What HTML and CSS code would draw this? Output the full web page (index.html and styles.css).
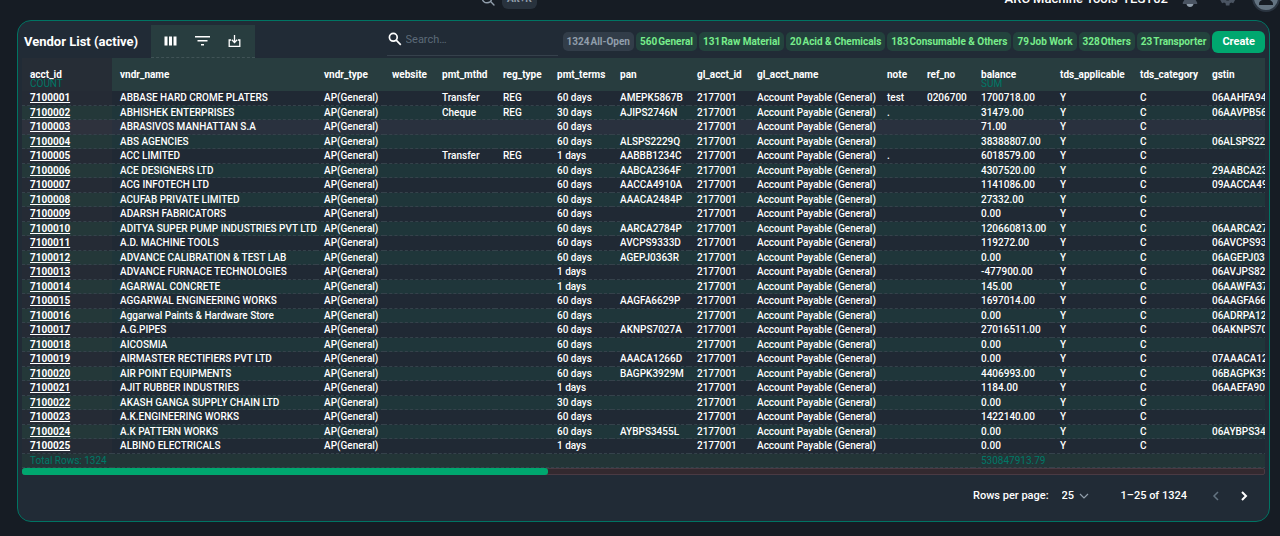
FILE: index.html
```html
<!DOCTYPE html>
<html lang="en">
<head>
    <meta charset="UTF-8">
    <meta name="viewport" content="width=device-width, initial-scale=1.0">
    <title>Vendor List</title>
    <link rel="stylesheet" href="styles.css">
</head>
<body>
    <header class="topbar">
        <button class="quick-search" aria-label="Quick search">
            <svg width="14" height="14" viewBox="0 0 14 14" fill="none" stroke="currentColor" stroke-width="1.4" stroke-linecap="round"><circle cx="6" cy="6" r="4.8"/><path d="M9.6 9.6 13 13"/></svg>
            <kbd>Alt+K</kbd>
        </button>
        <div class="account">
            <span class="company">ARC Machine Tools-TEST02</span>
            <button class="icon-button bell" aria-label="Notifications">
                <svg width="18" height="20" viewBox="0 0 18 20"><path d="M9 1C5.500 1 4 4 4 7v4l-2.200 3.500V16h14.400v-1.500L14 11V7c0-3-1.500-6-5-6z" fill="#4a5462"/><path d="M5.500 16h7c-.4 2-1.700 3-3.500 3s-3.100-1-3.500-3z" fill="#919eab"/></svg>
            </button>
            <button class="icon-button gear" aria-label="Settings">
                <svg width="20" height="20" viewBox="0 0 24 24" fill="currentColor"><path d="M19.400 13a7.500 7.500 0 0 0 0-2l2.200-1.600-2.100-3.700-2.500 1a7.500 7.500 0 0 0-1.700-1L14.900 3h-4.200l-.4 2.700a7.500 7.500 0 0 0-1.700 1l-2.500-1L4 9.400 6.200 11a7.500 7.500 0 0 0 0 2L4 14.600l2.100 3.700 2.500-1a7.500 7.500 0 0 0 1.700 1l.4 2.700h4.200l.4-2.700a7.500 7.500 0 0 0 1.700-1l2.500 1 2.100-3.700zM12.800 15a3 3 0 1 1 0-6 3 3 0 0 1 0 6z"/></svg>
            </button>
            <button class="icon-button avatar" aria-label="Profile">
                <svg width="28" height="28" viewBox="0 0 28 28"><circle cx="14" cy="14" r="13" fill="#637381" stroke="#2b3541" stroke-width="2"/><circle cx="14" cy="10" r="4" fill="#161c24"/><path d="M7 20c0-3 3-4.500 7-4.500s7 1.500 7 4.500v1H7z" fill="#161c24"/></svg>
            </button>
        </div>
    </header>

    <main class="card">
        <div class="card-header">
            <h1>Vendor List (active)</h1>
            <div class="toolbar">
                <button class="icon-button" aria-label="Select columns">
                    <svg width="24" height="20" viewBox="0 0 24 20" fill="currentColor"><path d="M5.500 5.500h3v9h-3zM10 5.500h3v9h-3zM14.500 5.500h3v9h-3z"/></svg>
                </button>
                <button class="icon-button" aria-label="Show filters">
                    <svg width="24" height="20" viewBox="0 0 24 20" fill="currentColor"><path d="M4 5h15v1.600H4zM6.500 9h10v1.600h-10zM10 13h3v1.600h-3z"/></svg>
                </button>
                <button class="icon-button" aria-label="Export">
                    <svg width="24" height="20" viewBox="0 0 24 20" fill="none" stroke="currentColor" stroke-width="1.300"><path d="M11.500 4v7.500M8.800 8.800l2.700 2.700 2.700-2.700M8 9H6.200v6.300h10.600V9H15"/></svg>
                </button>
            </div>
            <label class="search">
                <svg width="14" height="14" viewBox="0 0 14 14" fill="none" stroke="currentColor" stroke-width="1.700"><circle cx="5.300" cy="5.300" r="3.900"/><path d="m8.200 8.200 4.600 4.600"/></svg>
                <input type="search" placeholder="Search…" aria-label="Search">
            </label>
            <div class="chips">
                <button class="chip chip-muted"><span>1324</span>All-Open</button>
                <button class="chip"><span>560</span>General</button>
                <button class="chip"><span>131</span>Raw Material</button>
                <button class="chip"><span>20</span>Acid &amp; Chemicals</button>
                <button class="chip"><span>183</span>Consumable &amp; Others</button>
                <button class="chip"><span>79</span>Job Work</button>
                <button class="chip"><span>328</span>Others</button>
                <button class="chip"><span>23</span>Transporter</button>
                <button class="create">Create</button>
            </div>
        </div>

        <div class="table-wrap">
            <table>
                <colgroup>
                    <col class="c-id"><col class="c-name"><col class="c-type"><col class="c-web">
                    <col class="c-mthd"><col class="c-reg"><col class="c-terms"><col class="c-pan">
                    <col class="c-gl"><col class="c-glname"><col class="c-note"><col class="c-ref">
                    <col class="c-bal"><col class="c-tds"><col class="c-cat"><col class="c-gstin">
                </colgroup>
                <thead>
                    <tr>
                        <th>acct_id<small>COUNT</small></th><th>vndr_name</th><th>vndr_type</th><th>website</th>
                        <th>pmt_mthd</th><th>reg_type</th><th>pmt_terms</th><th>pan</th>
                        <th>gl_acct_id</th><th>gl_acct_name</th><th>note</th><th>ref_no</th>
                        <th>balance<small>SUM</small></th><th>tds_applicable</th><th>tds_category</th><th>gstin</th>
                    </tr>
                </thead>
                <tbody id="rows"></tbody>
                <tfoot>
                    <tr>
                        <td>Total Rows: 1324</td><td colspan="11"></td><td>530847913.79</td><td colspan="3"></td>
                    </tr>
                </tfoot>
            </table>
        </div>
        <div class="scroll-track"><div class="scroll-thumb"></div></div>

        <div class="pagination">
            <label for="pageSize">Rows per page:</label>
            <div class="select-wrap">
                <select id="pageSize"><option>25</option><option>50</option><option>100</option></select>
                <svg width="10" height="6" viewBox="0 0 10 6" fill="none" stroke="currentColor" stroke-width="1.200"><path d="m1 1 4 4 4-4"/></svg>
            </div>
            <span class="range">1–25 of 1324</span>
            <button class="icon-button prev" aria-label="Previous page" disabled>
                <svg width="8" height="10" viewBox="0 0 8 10" fill="none" stroke="currentColor" stroke-width="1.500"><path d="M6 1 2 5l4 4"/></svg>
            </button>
            <button class="icon-button next" aria-label="Next page">
                <svg width="8" height="10" viewBox="0 0 8 10" fill="none" stroke="currentColor" stroke-width="2"><path d="m2 1 4 4-4 4"/></svg>
            </button>
        </div>
    </main>
    <script src="script.js"></script>
</body>
</html>
```

FILE: styles.css
```css
* {
    box-sizing: border-box;
}

body {
    margin: 0;
    padding: 0 10px 14px 17px;
    background-color: #161c24;
    color: #fff;
    font-family: Roboto, sans-serif;
    font-size: 10px;
    font-weight: 500;
}

button, input, select {
    font: inherit;
    color: inherit;
    background: none;
    border: none;
    margin: 0;
    padding: 0;
}

button {
    cursor: pointer;
}

svg {
    display: block;
}

/* Top bar */
.topbar {
    display: flex;
    justify-content: space-between;
    align-items: flex-end;
    height: 12px;
    margin: 0 -10px 8px 0;
}

.quick-search {
    display: flex;
    align-items: flex-end;
    gap: 7px;
    margin-left: 464px;
    color: #919eab;
}

.quick-search svg {
    margin-bottom: 6px;
}

kbd {
    padding: 0 5px;
    height: 20px;
    margin-bottom: 3px;
    border-radius: 6px;
    background-color: #28323d;
    font: 700 10px/20px Roboto, sans-serif;
}

.account {
    display: flex;
    align-items: flex-end;
}

.company {
    margin-right: 13px;
    margin-bottom: 4px;
    font-size: 13px;
    line-height: 18px;
}

.gear {
    margin: 0 15px 4px 18px;
    color: #4a5462;
}

.bell {
    margin-bottom: 4px;
}

/* Card */
.card {
    padding: 4px 4px 0;
    border: 1px solid #007463;
    border-radius: 14px;
    background-color: #212b36;
}

.card-header {
    display: flex;
    align-items: center;
    height: 33px;
}

h1 {
    width: 129px;
    margin: 0;
    padding-left: 2px;
    font-size: 13px;
    font-weight: 700;
    white-space: nowrap;
}

.toolbar {
    display: flex;
    align-items: center;
    gap: 8px;
    height: 33px;
    padding: 0 8px;
    border-bottom: 1px dashed #405356;
    background-color: #283d3f;
}

.search {
    display: flex;
    align-items: center;
    gap: 4px;
    width: 171px;
    height: 28px;
    margin: 0 5px 0 auto;
    padding: 0 1px 4px;
    border-bottom: 1px solid #36414c;
}

.search input {
    width: 130px;
    outline: none;
    font-size: 11px;
    font-weight: 400;
}

.search input::placeholder {
    color: #5c6a78;
}

.chips {
    display: flex;
    align-items: center;
    gap: 2px;
}

.chip {
    display: flex;
    gap: 1px;
    height: 19px;
    padding: 0 4px;
    border-radius: 5px;
    background-color: #23433d;
    color: #77ed8b;
    font-weight: 700;
    line-height: 19px;
    white-space: nowrap;
}

.chip-muted {
    background-color: #323d49;
    color: #919eab;
}

.create {
    height: 22px;
    padding: 0 10px;
    border-radius: 6px;
    background-color: #00a76f;
    font-size: 11px;
    font-weight: 700;
}

/* Table */
.table-wrap {
    overflow: hidden;
}

table {
    width: 1400px;
    table-layout: fixed;
    border-collapse: separate;
    border-spacing: 0;
}

.c-id { width: 90px; }
.c-name { width: 204px; }
.c-type { width: 68px; }
.c-web { width: 50px; }
.c-mthd { width: 61px; }
.c-reg { width: 54px; }
.c-terms { width: 63px; }
.c-pan { width: 77px; }
.c-gl { width: 60px; }
.c-glname { width: 130px; }
.c-note { width: 40px; }
.c-ref { width: 54px; }
.c-bal { width: 79px; }
.c-tds { width: 80px; }
.c-cat { width: 72px; }

th, td {
    padding: 0 8px;
    text-align: left;
    white-space: nowrap;
    line-height: 12px;
}

th {
    height: 33px;
    padding-top: 11px;
    vertical-align: top;
    background-color: #283d3f;
    font-weight: 700;
}

th:first-child {
    background-color: #262d36;
}

th small {
    display: block;
    margin-top: -3px;
    color: #007867;
    font-size: 10px;
    font-weight: 400;
}

tbody td {
    height: 15px;
    border-bottom: 1px dashed #35424b;
    background-color: #202934;
}

tbody tr:nth-child(even) td {
    height: 14px;
    background-color: #1f363a;
}

tbody tr:nth-child(3) td {
    background-color: #29313e;
}

tbody td:first-child {
    background-color: #252b35;
    font-weight: 700;
}

tbody tr:nth-child(even) td:first-child {
    background-color: #243839;
}

tbody tr:nth-child(3) td:first-child {
    background-color: #2e323d;
}

td a {
    color: inherit;
    text-decoration: underline;
}

tfoot td {
    height: 14px;
    border-bottom: 1px dashed #35424b;
    background-color: #233537;
    color: #007867;
    font-weight: 400;
}

.scroll-track {
    height: 7px;
    border: 1px solid #4a3a43;
    border-radius: 2px;
    background-color: #33292f;
}

.scroll-thumb {
    width: 526px;
    height: 7px;
    margin: -1px;
    border-radius: 3px;
    background-color: #00a76f;
}

/* Pagination */
.pagination {
    display: flex;
    justify-content: flex-end;
    align-items: center;
    height: 46px;
    padding: 0 17px 5px 0;
    font-size: 11px;
}

.select-wrap {
    display: flex;
    align-items: center;
    gap: 4px;
    margin: 0 32px 0 13px;
    color: #919eab;
}

.select-wrap select {
    width: 13px;
    appearance: none;
    color: #fff;
}

.prev {
    margin: 0 20px 0 25px;
    color: #637381;
}
```

FILE: script.js
```js
// id, name, method, reg type, terms, pan, note, ref no, balance, gstin
const vendors = [
    [7100001, 'ABBASE HARD CROME PLATERS', 'Transfer', 'REG', '60 days', 'AMEPK5867B', 'test', '0206700', '1700718.00', '06AAHFA943'],
    [7100002, 'ABHISHEK ENTERPRISES', 'Cheque', 'REG', '30 days', 'AJIPS2746N', '.', '', '31479.00', '06AAVPB564'],
    [7100003, 'ABRASIVOS MANHATTAN S.A', '', '', '60 days', '', '', '', '71.00', ''],
    [7100004, 'ABS AGENCIES', '', '', '60 days', 'ALSPS2229Q', '', '', '38388807.00', '06ALSPS222'],
    [7100005, 'ACC LIMITED', 'Transfer', 'REG', '1 days', 'AABBB1234C', '.', '', '6018579.00', ''],
    [7100006, 'ACE DESIGNERS LTD', '', '', '60 days', 'AABCA2364F', '', '', '4307520.00', '29AABCA23'],
    [7100007, 'ACG INFOTECH LTD', '', '', '60 days', 'AACCA4910A', '', '', '1141086.00', '09AACCA49'],
    [7100008, 'ACUFAB PRIVATE LIMITED', '', '', '60 days', 'AAACA2484P', '', '', '27332.00', ''],
    [7100009, 'ADARSH FABRICATORS', '', '', '60 days', '', '', '', '0.00', ''],
    [7100010, 'ADITYA SUPER PUMP INDUSTRIES PVT LTD', '', '', '60 days', 'AARCA2784P', '', '', '120660813.00', '06AARCA278'],
    [7100011, 'A.D. MACHINE TOOLS', '', '', '60 days', 'AVCPS9333D', '', '', '119272.00', '06AVCPS933'],
    [7100012, 'ADVANCE CALIBRATION & TEST LAB', '', '', '60 days', 'AGEPJ0363R', '', '', '0.00', '06AGEPJ036'],
    [7100013, 'ADVANCE FURNACE TECHNOLOGIES', '', '', '1 days', '', '', '', '-477900.00', '06AVJPS820'],
    [7100014, 'AGARWAL CONCRETE', '', '', '1 days', '', '', '', '145.00', '06AAWFA37'],
    [7100015, 'AGGARWAL ENGINEERING WORKS', '', '', '60 days', 'AAGFA6629P', '', '', '1697014.00', '06AAGFA662'],
    [7100016, 'Aggarwal Paints & Hardware Store', '', '', '60 days', '', '', '', '0.00', '06ADRPA125'],
    [7100017, 'A.G.PIPES', '', '', '60 days', 'AKNPS7027A', '', '', '27016511.00', '06AKNPS702'],
    [7100018, 'AICOSMIA', '', '', '60 days', '', '', '', '0.00', ''],
    [7100019, 'AIRMASTER RECTIFIERS PVT LTD', '', '', '60 days', 'AAACA1266D', '', '', '0.00', '07AAACA12'],
    [7100020, 'AIR POINT EQUIPMENTS', '', '', '60 days', 'BAGPK3929M', '', '', '4406993.00', '06BAGPK392'],
    [7100021, 'AJIT RUBBER INDUSTRIES', '', '', '1 days', '', '', '', '1184.00', '06AAEFA900'],
    [7100022, 'AKASH GANGA SUPPLY CHAIN LTD', '', '', '30 days', '', '', '', '0.00', ''],
    [7100023, 'A.K.ENGINEERING WORKS', '', '', '60 days', '', '', '', '1422140.00', ''],
    [7100024, 'A.K PATTERN WORKS', '', '', '60 days', 'AYBPS3455L', '', '', '0.00', '06AYBPS345'],
    [7100025, 'ALBINO ELECTRICALS', '', '', '1 days', '', '', '', '0.00', '']
];

const tbody = document.getElementById('rows');

vendors.forEach(([id, name, method, reg, terms, pan, note, refNo, balance, gstin]) => {
    const row = tbody.insertRow();
    const link = document.createElement('a');
    link.href = '#' + id;
    link.textContent = id;
    row.insertCell().appendChild(link);

    [name, 'AP(General)', '', method, reg, terms, pan, '2177001', 'Account Payable (General)',
        note, refNo, balance, 'Y', 'C', gstin].forEach(value => {
        row.insertCell().textContent = value;
    });
});
```
